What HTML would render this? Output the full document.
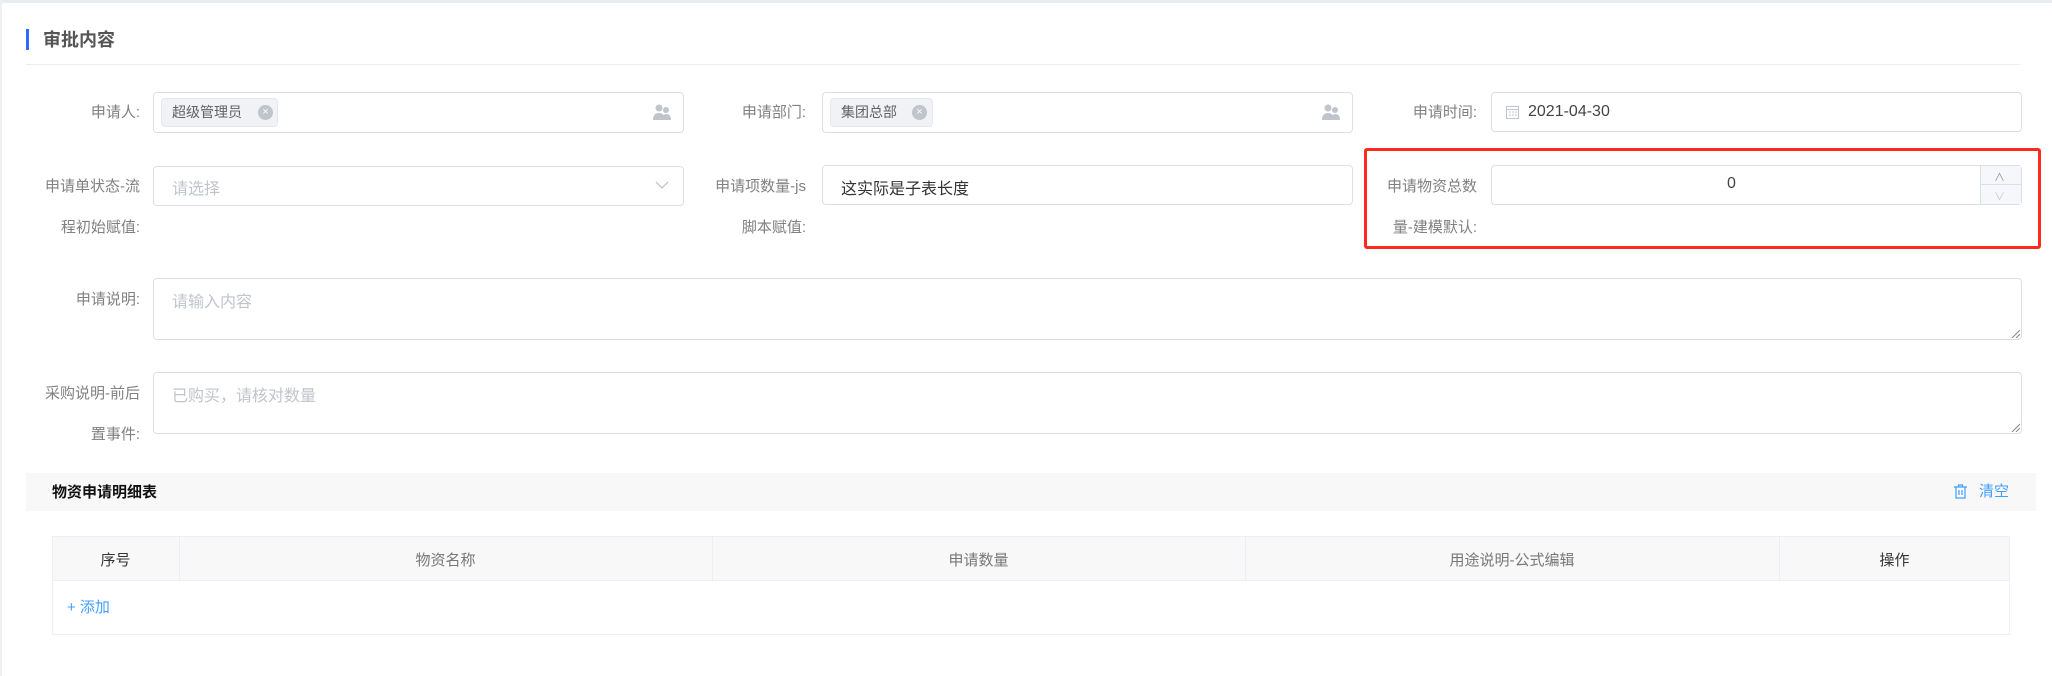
<!DOCTYPE html>
<html><head><meta charset="utf-8"><style>
*{box-sizing:border-box;margin:0;padding:0}
body{width:2052px;height:676px;background:#fff;font-family:"Liberation Sans","Noto Sans CJK SC",sans-serif;position:relative;overflow:hidden;color:#333}
.abs{position:absolute}
.lbl{position:absolute;font-size:15px;color:#808080;text-align:right;white-space:nowrap;line-height:20px}
.inp{position:absolute;border:1px solid #dcdfe6;border-radius:4px;background:#fff}
.tag{position:absolute;background:#f0f2f5;border:1px solid #e4e7ed;border-radius:4px;font-size:14px;color:#606266;line-height:27px;padding-left:10px}
.x{position:absolute;width:15px;height:15px;border-radius:50%;background:#c0c4cc;color:#fff;font-size:11px;line-height:15px;text-align:center}
.ph{color:#c0c4cc;font-size:16px}
.rs{position:absolute;width:10px;height:10px}
</style></head><body>
<div class="abs" style="left:0;top:0;width:2052px;height:3px;background:#e8edf2"></div>
<div class="abs" style="left:0;top:0;width:2px;height:676px;background:#eef0f3"></div>
<div class="abs" style="left:26px;top:29px;width:3px;height:21px;background:#2f6bff"></div>
<div class="abs" style="left:43px;top:29px;font-size:18px;font-weight:bold;color:#555;line-height:22px">审批内容</div>
<div class="abs" style="left:26px;top:64px;width:1994px;height:1px;background:#ebeef2"></div>

<div class="lbl" style="right:1912px;top:103px">申请人:</div>
<div class="inp" style="left:153px;top:92px;width:531px;height:41px"></div>
<div class="tag" style="left:161px;top:98px;width:117px;height:29px">超级管理员</div>
<div class="x" style="left:258px;top:105px">×</div>
<svg class="abs" style="left:653px;top:103px" width="18" height="18" viewBox="0 0 18 18"><circle cx="6" cy="5" r="3.5" fill="#c0c4cc"/><path d="M0 17c0-5 2.5-7 6-7s6 2 6 7z" fill="#c0c4cc"/><circle cx="13" cy="7" r="3" fill="#c0c4cc"/><path d="M9 17c0-4 2-6 4.5-6S18 13 18 17z" fill="#c0c4cc"/></svg>

<div class="lbl" style="right:1246px;top:103px">申请部门:</div>
<div class="inp" style="left:822px;top:92px;width:531px;height:41px"></div>
<div class="tag" style="left:830px;top:98px;width:103px;height:29px">集团总部</div>
<div class="x" style="left:912px;top:105px">×</div>
<svg class="abs" style="left:1322px;top:103px" width="18" height="18" viewBox="0 0 18 18"><circle cx="6" cy="5" r="3.5" fill="#c0c4cc"/><path d="M0 17c0-5 2.5-7 6-7s6 2 6 7z" fill="#c0c4cc"/><circle cx="13" cy="7" r="3" fill="#c0c4cc"/><path d="M9 17c0-4 2-6 4.5-6S18 13 18 17z" fill="#c0c4cc"/></svg>

<div class="lbl" style="right:575px;top:103px">申请时间:</div>
<div class="inp" style="left:1491px;top:92px;width:531px;height:40px"></div>
<svg class="abs" style="left:1506px;top:105px" width="13" height="14" viewBox="0 0 13 14"><rect x="0.5" y="1.5" width="12" height="12" fill="none" stroke="#c0c4cc"/><path d="M0 4.5h13M3 7h2M6 7h2M9 7h2M3 10h2M6 10h2M9 10h2" stroke="#c0c4cc"/></svg>
<div class="abs" style="left:1528px;top:101px;font-size:16px;color:#444;line-height:22px">2021-04-30</div>

<div class="lbl" style="right:1912px;top:177px">申请单状态-流</div>
<div class="lbl" style="right:1912px;top:218px">程初始赋值:</div>
<div class="inp" style="left:153px;top:166px;width:531px;height:40px"></div>
<div class="abs ph" style="left:172px;top:175px">请选择</div>
<svg class="abs" style="left:655px;top:180px" width="14" height="10" viewBox="0 0 14 10"><path d="M1 2l6 6 6-6" fill="none" stroke="#c0c4cc" stroke-width="1.3"/></svg>

<div class="lbl" style="right:1246px;top:177px">申请项数量-js</div>
<div class="lbl" style="right:1246px;top:218px">脚本赋值:</div>
<div class="inp" style="left:822px;top:165px;width:531px;height:40px"></div>
<div class="abs" style="left:841px;top:175px;font-size:16px;color:#333">这实际是子表长度</div>

<div class="abs" style="left:1364px;top:148px;width:677px;height:101px;border:3px solid #ff2a1f;border-radius:3px"></div>
<div class="lbl" style="right:575px;top:177px">申请物资总数</div>
<div class="lbl" style="right:575px;top:218px">量-建模默认:</div>
<div class="inp" style="left:1491px;top:165px;width:531px;height:40px"></div>
<div class="abs" style="left:1980px;top:166px;width:41px;height:38px;background:#f5f7fa;border-left:1px solid #dcdfe6"></div>
<div class="abs" style="left:1980px;top:184px;width:41px;height:1px;background:#dcdfe6"></div>
<div class="abs" style="left:1994px;top:169px;font-size:11px;color:#999">∧</div>
<div class="abs" style="left:1994px;top:188px;font-size:11px;color:#ccc">∨</div>
<div class="abs" style="left:1727px;top:175px;font-size:16px;color:#444">0</div>

<div class="lbl" style="right:1912px;top:290px">申请说明:</div>
<div class="inp" style="left:153px;top:278px;width:1869px;height:62px"></div>
<div class="abs ph" style="left:172px;top:288px">请输入内容</div>
<svg class="rs" style="left:2010px;top:328px" viewBox="0 0 10 10"><path d="M2 10L10 2M6 10L10 6" stroke="#888" stroke-width="1"/></svg>

<div class="lbl" style="right:1912px;top:384px">采购说明-前后</div>
<div class="lbl" style="right:1912px;top:425px">置事件:</div>
<div class="inp" style="left:153px;top:372px;width:1869px;height:62px"></div>
<div class="abs ph" style="left:172px;top:382px">已购买，请核对数量</div>
<svg class="rs" style="left:2010px;top:422px" viewBox="0 0 10 10"><path d="M2 10L10 2M6 10L10 6" stroke="#888" stroke-width="1"/></svg>

<div class="abs" style="left:26px;top:473px;width:2010px;height:38px;background:#f8f8f8"></div>
<div class="abs" style="left:52px;top:483px;font-size:15px;font-weight:bold;color:#111;line-height:20px">物资申请明细表</div>
<svg class="abs" style="left:1954px;top:484px" width="13" height="15" viewBox="0 0 13 15"><path d="M0 3h13M4.5 3V1h4v2M2 3v11h9V3M5 6v5M8 6v5" fill="none" stroke="#409eff" stroke-width="1.2"/></svg>
<div class="abs" style="left:1979px;top:482px;font-size:15px;color:#409eff;line-height:20px">清空</div>

<div class="abs" style="left:52px;top:536px;width:1958px;height:99px;border:1px solid #ebeef5"></div>
<div class="abs" style="left:52px;top:536px;width:1958px;height:45px;background:#f8f8f9;border:1px solid #ebeef5"></div>
<div class="abs" style="left:179px;top:536px;width:1px;height:45px;background:#ebeef5"></div>
<div class="abs" style="left:712px;top:536px;width:1px;height:45px;background:#ebeef5"></div>
<div class="abs" style="left:1245px;top:536px;width:1px;height:45px;background:#ebeef5"></div>
<div class="abs" style="left:1779px;top:536px;width:1px;height:45px;background:#ebeef5"></div>
<div class="abs" style="left:52px;top:549px;width:127px;text-align:center;font-size:15px;color:#333">序号</div>
<div class="abs" style="left:179px;top:549px;width:533px;text-align:center;font-size:15px;color:#777">物资名称</div>
<div class="abs" style="left:712px;top:549px;width:533px;text-align:center;font-size:15px;color:#777">申请数量</div>
<div class="abs" style="left:1245px;top:549px;width:534px;text-align:center;font-size:15px;color:#777">用途说明-公式编辑</div>
<div class="abs" style="left:1779px;top:549px;width:231px;text-align:center;font-size:15px;color:#333">操作</div>
<div class="abs" style="left:67px;top:598px;font-size:15px;color:#409eff;line-height:20px">+ 添加</div>
</body></html>
